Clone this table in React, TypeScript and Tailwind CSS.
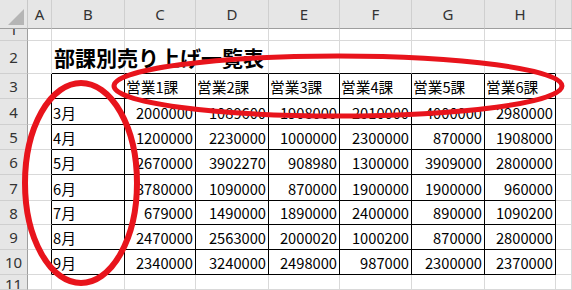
import React from "react";

const months = ["3月", "4月", "5月", "6月", "7月", "8月", "9月"];
const data: number[][] = [
  [2000000, 1089600, 1908000, 2010000, 4000000, 2980000],
  [1200000, 2230000, 1000000, 2300000, 870000, 1908000],
  [2670000, 3902270, 908980, 1300000, 3909000, 2800000],
  [3780000, 1090000, 870000, 1900000, 1900000, 960000],
  [679000, 1490000, 1890000, 2400000, 890000, 1090200],
  [2470000, 2563000, 2000020, 1000200, 870000, 2800000],
  [2340000, 3240000, 2498000, 987000, 2300000, 2370000],
];
const letters = ["A", "B", "C", "D", "E", "F", "G", "H", ""];
const ROWS = 12; // header + rows 1..11
const COLS = 10; // header + A..I

function cellClass(r: number, c: number): string {
  const inTableRow = r >= 3 && r <= 10;
  const rightBlack = inTableRow && c >= 1 && c <= 8;
  const bottomBlack = r >= 2 && r <= 10 && c >= 2 && c <= 8;
  const rb = rightBlack ? "border-r-black" : "border-r-[#d9d9d9]";
  const bb = bottomBlack ? "border-b-black" : "border-b-[#d9d9d9]";
  return `border-r border-b ${rb} ${bb}`;
}

function content(r: number, c: number): React.ReactNode {
  if (r === 2 && c === 2) {
    return (
      <div className="relative z-10 flex h-full items-end whitespace-nowrap pb-[1px] pl-[2px] text-[21px] font-bold leading-[30px] text-black">
        部課別売り上げ一覧表
      </div>
    );
  }
  if (r === 3 && c >= 3 && c <= 8) {
    return (
      <div className="flex h-full items-end whitespace-nowrap pl-[1px] pb-[1px] text-[14.7px] leading-[20px] text-black">
        {`営業${c - 2}課`}
      </div>
    );
  }
  if (r >= 4 && r <= 10 && c === 2) {
    return (
      <div className="flex h-full items-end whitespace-nowrap pl-[1px] pb-[1px] text-[14.7px] leading-[20px] text-black">
        {months[r - 4]}
      </div>
    );
  }
  if (r >= 4 && r <= 10 && c >= 3 && c <= 8) {
    return (
      <div className="flex h-full items-end justify-end whitespace-nowrap pr-[2px] pb-[1px] text-[14.7px] leading-[20px] text-black">
        {data[r - 4][c - 3]}
      </div>
    );
  }
  return null;
}

export default function App() {
  const cells: React.ReactNode[] = [];
  for (let r = 0; r < ROWS; r++) {
    for (let c = 0; c < COLS; c++) {
      const key = `${r}-${c}`;
      if (r === 0 && c === 0) {
        cells.push(
          <div key={key} className="relative border-r border-b border-r-[#c8c8c8] border-b-[#9e9e9e] bg-[#e6e6e6]">
            <svg className="absolute left-0 top-0" width="27" height="28" viewBox="0 0 27 28">
              <polygon points="8,25 24,9 24,25" fill="#b5b5b5" />
            </svg>
          </div>
        );
      } else if (r === 0) {
        cells.push(
          <div
            key={key}
            className="flex items-center justify-center border-r border-b border-r-[#cfcfcf] border-b-[#9e9e9e] bg-[#e6e6e6] pt-[1px] text-[15px] text-[#333]"
            style={{ fontFamily: "'Noto Sans', 'Liberation Sans', sans-serif" }}
          >
            {letters[c - 1]}
          </div>
        );
      } else if (c === 0) {
        const isOne = r === 1;
        cells.push(
          <div
            key={key}
            className={
              isOne
                ? "flex items-start justify-center overflow-hidden border-r border-b border-r-[#9e9e9e] border-b-[#cfcfcf] bg-[#e6e6e6] text-[15px] text-[#333]"
                : "flex items-center justify-center overflow-hidden border-r border-b border-r-[#9e9e9e] border-b-[#cfcfcf] bg-[#e6e6e6] text-[15px] text-[#333]"
            }
            style={{ fontFamily: "'Noto Sans', 'Liberation Sans', sans-serif" }}
          >
            <span className={isOne ? "mt-[-10px] leading-[20px]" : r === 11 ? "mt-[4px] leading-[20px]" : "leading-[20px]"}>{r}</span>
          </div>
        );
      } else {
        cells.push(
          <div key={key} className={`${cellClass(r, c)} min-w-0 overflow-visible bg-white`}>
            {content(r, c)}
          </div>
        );
      }
    }
  }

  return (
    <div
      className="relative h-[290px] w-[572px] overflow-hidden bg-white"
      style={{ fontFamily: "'Noto Sans CJK JP', 'Noto Sans', sans-serif" }}
    >
      <div className="grid h-full grid-cols-[28px_24px_73px_71px_73px_71px_72px_73px_71px_1fr] grid-rows-[29px_12px_33px_25px_26px_25px_25px_26px_24px_25px_25px_1fr]">
        {cells}
      </div>
      <svg className="pointer-events-none absolute left-0 top-0 z-20" width="572" height="290" viewBox="0 0 572 290">
        <ellipse cx="81" cy="183" rx="56" ry="100" fill="none" stroke="#e8141c" strokeWidth="6" />
        <ellipse cx="338" cy="86" rx="224" ry="30" fill="none" stroke="#e8141c" strokeWidth="5" />
      </svg>
    </div>
  );
}
